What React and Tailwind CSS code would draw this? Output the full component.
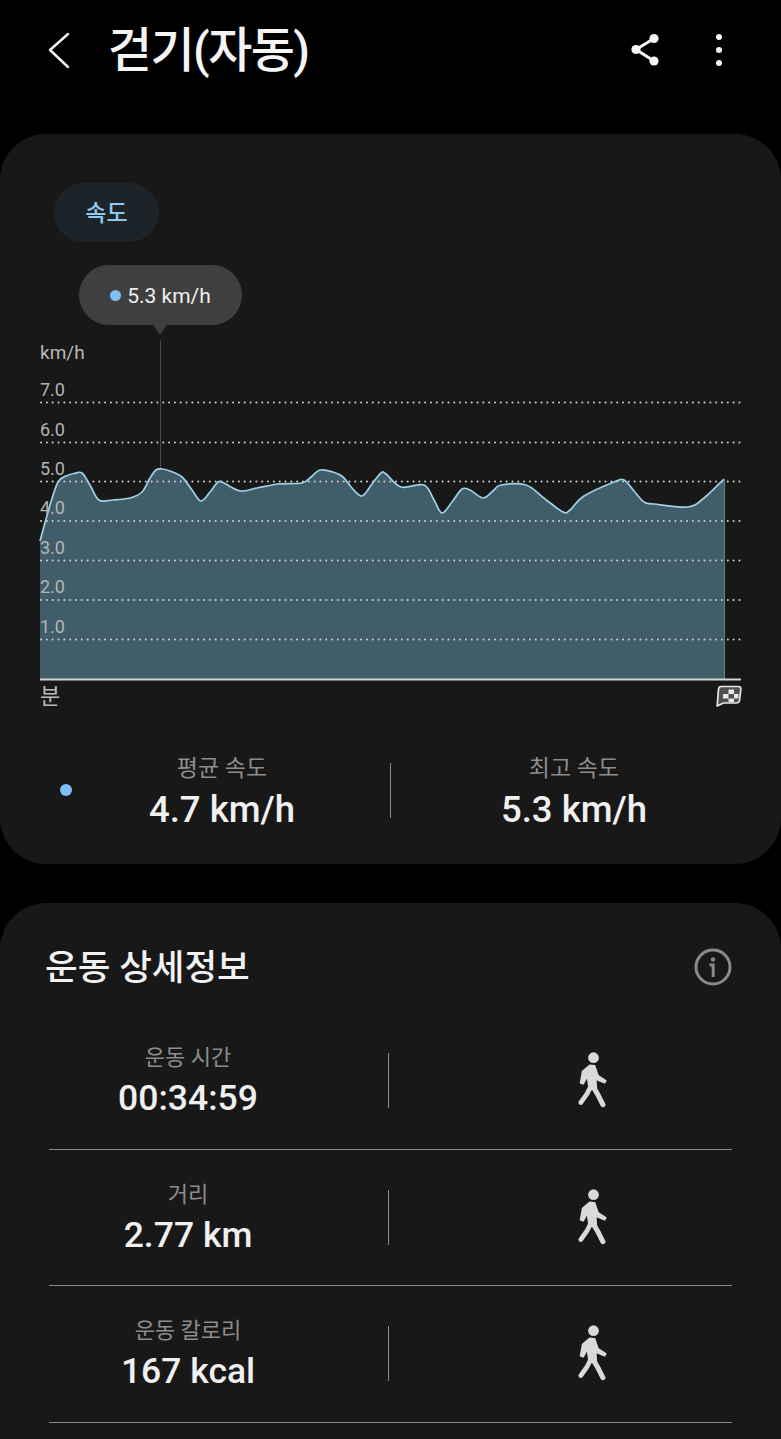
const PTS = [[40,541],[50,505],[58,482],[66,476],[74,473.5],[82,473],[90,485],[99,500],[113,500],[130,498],[142,492],[150,478],[156,470],[162,469],[170,471],[182,477],[192,490],[201,501],[210,492],[218,482],[224,483],[240,491],[257,488],[278,484],[302,483],[311,477],[320,470],[333,472],[343,477],[352,488],[362,496],[372,484],[381,473],[386,474],[401,487],[424,485],[434,500],[442,513],[452,502],[462,489],[470,490],[483,498],[493,491],[501,485],[526,485],[545,499],[563,512],[570,510],[584,496],[614,482],[624,480],[634,491],[644,502],[654,504],[688,507],[704,498],[724,479]];

function smooth(pts) {
  let d = `M${pts[0][0]} ${pts[0][1]}`;
  for (let i = 0; i < pts.length - 1; i++) {
    const p0 = pts[Math.max(0, i - 1)];
    const p1 = pts[i];
    const p2 = pts[i + 1];
    const p3 = pts[Math.min(pts.length - 1, i + 2)];
    const c1x = p1[0] + (p2[0] - p0[0]) / 6;
    const c1y = p1[1] + (p2[1] - p0[1]) / 6;
    const c2x = p2[0] - (p3[0] - p1[0]) / 6;
    const c2y = p2[1] - (p3[1] - p1[1]) / 6;
    d += ` C${c1x} ${c1y} ${c2x} ${c2y} ${p2[0]} ${p2[1]}`;
  }
  return d;
}

const LINE = smooth(PTS);
const GRID = [
  { y: 402, label: "7.0" },
  { y: 442, label: "6.0" },
  { y: 481, label: "5.0" },
  { y: 520.5, label: "4.0" },
  { y: 560, label: "3.0" },
  { y: 599.5, label: "2.0" },
  { y: 639, label: "1.0" },
];
const OY = 340;

function Chart() {
  return (
    <div className="relative h-[380px] w-full">
      <svg className="absolute left-0 top-0" width="781" height="380" viewBox={`0 ${OY} 781 380`}>
        <path d={`${LINE} L724 679 L40 679 Z`} fill="#405d69" />
        <line x1="160.5" y1="335" x2="160.5" y2="469" stroke="#474747" strokeWidth="1" />
        {GRID.map((g) => (
          <line key={g.y} x1="41" x2="742" y1={g.y + 0.5} y2={g.y + 0.5} stroke="#c9cbcb" strokeWidth="2" strokeLinecap="round" strokeDasharray="0.1 5.72" />
        ))}
        <path d={LINE} fill="none" stroke="#9fd0e6" strokeWidth="1.7" />
        <line x1="724.5" y1="479" x2="724.5" y2="679" stroke="#66808b" strokeWidth="1" />
        <line x1="40" x2="741" y1="679.5" y2="679.5" stroke="#d3d6d7" strokeWidth="2" />
        <g transform="translate(716 685)">
          <path d="M5 1.5 H22.5 Q25.2 1.5 24.8 4.5 L23.6 15 Q23.2 18 20 18 H7.5 L1.2 21 L2.4 5 Q2.6 1.5 5 1.5 Z" fill="#505050" stroke="#e6e6e6" strokeWidth="1.7" strokeLinejoin="round" />
          <rect x="7" y="9" width="5.5" height="4.5" fill="#e6e6e6" />
          <rect x="12.5" y="4.5" width="5.5" height="4.5" fill="#e6e6e6" />
          <rect x="18" y="9" width="4.5" height="4.5" fill="#e6e6e6" />
          <rect x="12.5" y="13.5" width="5.5" height="3.5" fill="#e6e6e6" />
        </g>
      </svg>
      {GRID.map((g) => (
        <span key={g.label} className="absolute left-[40px] text-[18px] leading-[20px] text-[#b3b5b5]" style={{ top: g.y - OY - 22.5 }}>
          {g.label}
        </span>
      ))}
      <span className="absolute left-[40px] top-[3px] text-[19px] leading-[20px] text-[#b9b9b9]">km/h</span>
      <span className="absolute left-[40px] top-[343px] text-[22px] leading-[28px] text-[#b9b9b9]">분</span>
    </div>
  );
}

function Walker() {
  return (
    <svg width="32" height="57" viewBox="110 370 95 170" fill="none" stroke="#d9d9d9" strokeLinecap="round" strokeLinejoin="round">
      <circle cx="159" cy="387" r="16" fill="#d9d9d9" stroke="none" />
      <path
        d="M148 410 L162 412 L172 441 L195 456 L192 461 L165 450 L167 478 L147 482 L141 440 L128 464 L121 462 L127 428 Z"
        fill="#d9d9d9"
        strokeWidth="6"
      />
      <path d="M148 478 L140 494 L121 521" strokeWidth="14" />
      <path d="M157 472 L172 497 L187 527" strokeWidth="15" />
    </svg>
  );
}

function DetailRow({ label, value }) {
  return (
    <div className="mx-[49px] flex h-[136.5px] items-center border-b border-[#8a8a8a]">
      <div className="flex w-[278px] flex-col items-center pt-[2px]">
        <span className="pt-[1px] text-[22px] leading-[30px] text-[#8d8d8d]">{label}</span>
        <span className="mt-[2px] text-[35.5px] font-medium leading-[46px] text-[#f0f0f0]">{value}</span>
      </div>
      <div className="ml-[61px] h-[55px] w-px bg-[#8c8c8c]" />
      <div className="ml-[188px]">
        <Walker />
      </div>
    </div>
  );
}

export default function App() {
  return (
    <div
      className="h-[1439px] w-[781px] overflow-hidden bg-black text-white"
      style={{ fontFamily: 'Roboto, "Noto Sans CJK KR", sans-serif' }}
    >
      <header className="flex h-[134px] items-start pl-[44px] pr-[59px] pt-[24px]">
        <svg width="30" height="52" viewBox="44 24 30 52" className="shrink-0">
          <path d="M68 34 L50 50 L68 67" fill="none" stroke="#f2f2f2" strokeWidth="2.5" strokeLinecap="round" strokeLinejoin="round" />
        </svg>
        <h1 className="ml-[34px] pt-[1px] text-[48px] font-medium leading-[52px] tracking-[-1.6px] text-[#f5f5f5]">걷기(자동)</h1>
        <div className="ml-auto flex items-center gap-[56px] pt-[9px]">
          <svg width="30" height="34" viewBox="631 33 30 34" fill="#f5f5f5">
            <circle cx="655" cy="38.5" r="4.6" />
            <circle cx="637" cy="49.5" r="4.6" />
            <circle cx="655" cy="61" r="4.6" />
            <path d="M655 38.5 L637 49.5 L655 61" fill="none" stroke="#f5f5f5" strokeWidth="3" />
          </svg>
          <div className="flex w-[6px] flex-col gap-[7px]">
            <span className="h-[6px] w-[6px] rounded-full bg-[#f5f5f5]" />
            <span className="h-[6px] w-[6px] rounded-full bg-[#f5f5f5]" />
            <span className="h-[6px] w-[6px] rounded-full bg-[#f5f5f5]" />
          </div>
        </div>
      </header>

      <section className="relative h-[730px] rounded-[46px] bg-[#181818] pt-[49px]">
        <div className="ml-[54px] flex h-[59px] w-[105px] items-center justify-center rounded-[30px] bg-[#1c2329] pt-[3px] text-[23px] font-medium text-[#8fc6ee]">
          속도
        </div>
        <div className="absolute left-[79px] top-[131px] z-10 flex h-[60px] w-[163px] items-center justify-center gap-[6px] rounded-[30px] bg-[#3f3f3f]">
          <span className="h-[11px] w-[11px] rounded-full bg-[#7fbff5]" />
          <span className="pt-[2px] text-[21px] leading-[24px] text-[#f0f0f0]">5.3 km/h</span>
          <span className="absolute left-[74px] top-[60px] h-0 w-0 border-x-[7px] border-t-[10px] border-x-transparent border-t-[#3f3f3f]" />
        </div>
        <div className="mt-[98px]">
          <Chart />
        </div>
        <div className="relative mt-[34px] flex items-center">
          <span className="absolute left-[60px] top-[30px] h-[12px] w-[12px] rounded-full bg-[#7fbff5]" />
          <div className="flex w-[444px] flex-col items-center">
            <span className="text-[23px] leading-[30px] text-[#8d8d8d]">평균 속도</span>
            <span className="mt-[3px] text-[36.5px] font-medium leading-[46px] text-[#f0f0f0]">4.7 km/h</span>
          </div>
          <div className="absolute left-[390px] top-[9px] h-[55px] w-px bg-[#8c8c8c]" />
          <div className="absolute left-[390px] top-0 flex w-[368px] flex-col items-center">
            <span className="text-[23px] leading-[30px] text-[#8d8d8d]">최고 속도</span>
            <span className="mt-[3px] text-[36.5px] font-medium leading-[46px] text-[#f0f0f0]">5.3 km/h</span>
          </div>
        </div>
      </section>

      <section className="mt-[39px] h-[600px] rounded-[46px] bg-[#181818] pt-[40px]">
        <div className="flex items-center justify-between pl-[45px] pr-[49px]">
          <h2 className="pt-[2px] text-[35.5px] font-medium leading-[46px] text-[#f2f2f2]">운동 상세정보</h2>
          <svg width="38" height="38" viewBox="0 0 38 38" fill="none">
            <circle cx="19" cy="19" r="17" stroke="#8a8a8a" strokeWidth="3" />
            <circle cx="19" cy="11.5" r="2.2" fill="#8a8a8a" />
            <path d="M15.5 17 H19.2 V29" stroke="#8a8a8a" strokeWidth="3" />
          </svg>
        </div>
        <div className="mt-[22px]">
          <DetailRow label="운동 시간" value="00:34:59" />
          <DetailRow label="거리" value="2.77 km" />
          <DetailRow label="운동 칼로리" value="167 kcal" />
        </div>
      </section>
    </div>
  );
}
